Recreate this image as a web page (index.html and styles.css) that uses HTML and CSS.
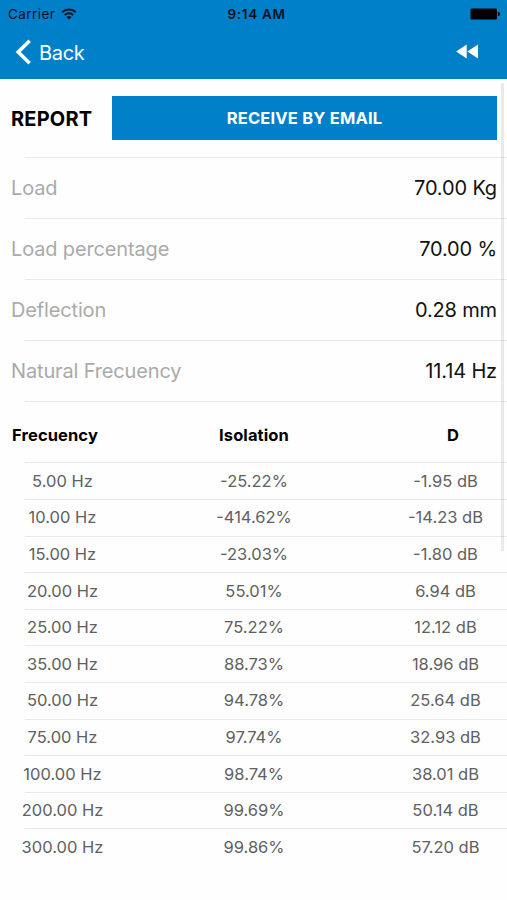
FILE: index.html
```html
<!DOCTYPE html>
<html lang="en">
<head>
    <meta charset="UTF-8">
    <meta name="viewport" content="width=device-width, initial-scale=1.0">
    <title>Report</title>
    <link rel="stylesheet" href="styles.css">
</head>
<body>

    <header class="header">
        <div class="status-bar">
            <div class="carrier">
                <span>Carrier</span>
                <svg class="wifi" width="16" height="12" viewBox="0 0 16 12" fill="none" stroke="#04111c" stroke-width="1.9">
                    <path d="M1.2 4.3a9.8 9.8 0 0 1 13.6 0"/>
                    <path d="M3.8 7a6.1 6.1 0 0 1 8.4 0"/>
                    <path d="M8 11.6L5.5 9.1a3.6 3.6 0 0 1 5 0z" fill="#04111c" stroke="none"/>
                </svg>
            </div>
            <span class="time">9:14 AM</span>
            <svg class="battery" width="30" height="12" viewBox="0 0 30 12">
                <rect x="0.5" y="0.5" width="26.5" height="11" rx="1.2"/>
                <path d="M28 4a2 2 0 0 1 0 4z"/>
            </svg>
        </div>
        <nav class="nav-bar">
            <a class="back">
                <svg width="17" height="26" viewBox="0 0 17 26" fill="none" stroke="#fff" stroke-width="3.6">
                    <path d="M14.7 1.8L3.2 13l11.5 11.2"/>
                </svg>
                <span>Back</span>
            </a>
            <svg class="rewind" width="22" height="15" viewBox="0 0 22 15" fill="#fff">
                <path d="M10.7 0.5v14L0.2 7.5z"/>
                <path d="M22 0.5v14L11.3 7.5z"/>
            </svg>
        </nav>
    </header>

    <main class="content">
        <div class="report">
            <h1>REPORT</h1>
            <button class="email-button">RECEIVE BY EMAIL</button>
        </div>

        <div class="summary-row"><span class="label">Load</span><span class="value">70.00 Kg</span></div>
        <div class="summary-row"><span class="label">Load percentage</span><span class="value">70.00 %</span></div>
        <div class="summary-row"><span class="label">Deflection</span><span class="value">0.28 mm</span></div>
        <div class="summary-row"><span class="label">Natural Frecuency</span><span class="value">11.14 Hz</span></div>

        <div class="table-head"><span>Frecuency</span><span>Isolation</span><span>D</span></div>
        <div class="table-row"><span>5.00 Hz</span><span>-25.22%</span><span>-1.95 dB</span></div>
        <div class="table-row"><span>10.00 Hz</span><span>-414.62%</span><span>-14.23 dB</span></div>
        <div class="table-row"><span>15.00 Hz</span><span>-23.03%</span><span>-1.80 dB</span></div>
        <div class="table-row"><span>20.00 Hz</span><span>55.01%</span><span>6.94 dB</span></div>
        <div class="table-row"><span>25.00 Hz</span><span>75.22%</span><span>12.12 dB</span></div>
        <div class="table-row"><span>35.00 Hz</span><span>88.73%</span><span>18.96 dB</span></div>
        <div class="table-row"><span>50.00 Hz</span><span>94.78%</span><span>25.64 dB</span></div>
        <div class="table-row"><span>75.00 Hz</span><span>97.74%</span><span>32.93 dB</span></div>
        <div class="table-row"><span>100.00 Hz</span><span>98.74%</span><span>38.01 dB</span></div>
        <div class="table-row"><span>200.00 Hz</span><span>99.69%</span><span>50.14 dB</span></div>
        <div class="table-row"><span>300.00 Hz</span><span>99.86%</span><span>57.20 dB</span></div>

        <div class="scroll-thumb"></div>
    </main>

</body>
</html>
```

FILE: styles.css
```css
* {
    box-sizing: border-box;
}
body {
    margin: 0;
    height: 900px;
    overflow: hidden;
    background-color: #fefefe;
    font-family: Inter, "Liberation Sans", sans-serif;
}
.header {
    height: 79px;
    background-color: #0080c9;
}
.status-bar {
    display: grid;
    grid-template-columns: 1fr auto 1fr;
    align-items: center;
    height: 27px;
    padding: 0 7px 0 8px;
    font-size: 13.5px;
    color: #04111c;
}
.carrier {
    display: flex;
    align-items: center;
    gap: 6px;
    letter-spacing: 0.45px;
}
.time {
    padding-left: 5px;
    font-weight: 600;
    letter-spacing: 0.7px;
}
.battery {
    justify-self: end;
}
.nav-bar {
    display: flex;
    justify-content: space-between;
    align-items: center;
    height: 50px;
    padding: 0 29px 0 15px;
}
.back {
    display: flex;
    align-items: center;
    gap: 7px;
    font-size: 20px;
    letter-spacing: -0.3px;
    color: white;
}
.back span {
    padding-top: 1px;
}
.rewind {
    margin-bottom: 2px;
}
.content {
    position: relative;
}
.report {
    display: flex;
    align-items: center;
    height: 78px;
    padding: 0 10px 0 11px;
}
.report h1 {
    width: 101px;
    margin: 0;
    padding-top: 1px;
    font-size: 20px;
    font-weight: 700;
    letter-spacing: 0.2px;
}
.email-button {
    flex: 1;
    height: 44px;
    padding: 0;
    border: none;
    background-color: #0080c9;
    color: white;
    font-family: inherit;
    font-size: 16.5px;
    font-weight: 700;
    letter-spacing: 0.2px;
}
/* dividers start 25px from the left and run off the right edge */
.summary-row, .table-head, .table-row {
    display: flex;
    justify-content: space-between;
    align-items: center;
    padding: 1px 10px 0 11px;
    background: linear-gradient(#e8e8e8, #e8e8e8) 25px 0 / 100% 1px no-repeat;
}
.summary-row {
    height: 61.1px;
    font-size: 20px;
    letter-spacing: -0.15px;
}
.label {
    color: #aaa;
}
.value {
    color: #111;
}
.table-head {
    height: 61.1px;
    padding-top: 6px;
    font-size: 16.5px;
    font-weight: 700;
    letter-spacing: 0.1px;
}
.table-head span {
    width: 88px;
    text-align: center;
    white-space: nowrap;
}
.table-row {
    height: 36.6px;
    padding-top: 0;
    font-size: 16.5px;
    color: #606060;
}
.table-row span {
    width: 103px;
    text-align: center;
}
.scroll-thumb {
    position: absolute;
    top: 4px;
    right: 3px;
    width: 3px;
    height: 468px;
    background-color: rgba(0, 0, 0, 0.08);
}
```
